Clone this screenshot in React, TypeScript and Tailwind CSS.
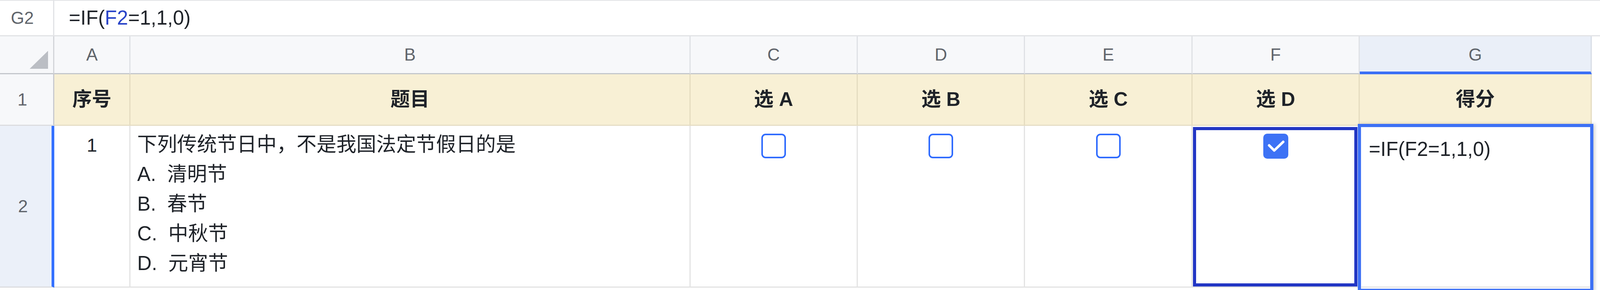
import React from "react";

const font = "font-['Liberation_Sans','Noto_Sans_CJK_SC',sans-serif]";
// column widths follow the reference sheet: row header, A, B, C, D, E, F, G, gutter
const grid = "grid grid-cols-[160fr_224fr_1646fr_492fr_492fr_492fr_492fr_682fr_24fr]";

function Box({ checked = false }: { checked?: boolean }) {
  if (checked) {
    return (
      <div className="w-[64px] h-[64px] rounded-[10px] bg-[#3d72f5] flex items-center justify-center">
        <svg width="64" height="64" viewBox="0 0 64 64">
          <polyline points="15,30 28,43 51,21" fill="none" stroke="#fff" strokeWidth="6.5" strokeLinecap="round" strokeLinejoin="round" />
        </svg>
      </div>
    );
  }
  return <div className="w-[63px] h-[63px] rounded-[11px] border-[4px] border-[#2f6bfe] bg-white" />;
}

const colLetters = ["A", "B", "C", "D", "E", "F"];
const heads = ["序号", "题目", "选 A", "选 B", "选 C", "选 D"];

export default function App() {
  return (
    <div className={`relative w-full h-[742px] overflow-hidden bg-white text-[#1f2329] ${font}`}>
      {/* formula bar */}
      <div className="flex h-[93px] border-t-2 border-b-[3px] border-[#e2e3e6]">
        <div className="w-[3.4%] shrink-0 border-r-[3px] border-[#e2e3e6] flex items-center justify-center pr-[22px] text-[44px] text-[#5f646b]">
          G2
        </div>
        <div className="flex items-center pl-[37px] text-[51px]">
          =IF(<span className="text-[#2a45c8]">F2</span>=1,1,0)
        </div>
      </div>

      {/* column headers */}
      <div className={`${grid} h-[97px]`}>
        <div className="min-w-0 bg-[#f7f8fa] border-r-[3px] border-b-[3px] border-r-[#d3d5d9] border-b-[#c4c7cc] flex items-end justify-end pr-[13px] pb-[11px]">
          <svg width="47" height="46" viewBox="0 0 47 46">
            <polygon points="47,0 47,46 0,46" fill="#bbbec4" />
          </svg>
        </div>
        {colLetters.map((c) => (
          <div
            key={c}
            className="min-w-0 bg-[#f7f8fa] border-r-[3px] border-b-[3px] border-r-[#dfe1e5] border-b-[#c4c7cc] flex items-center justify-center text-[44px] text-[#5f646b]"
          >
            {c}
          </div>
        ))}
        <div className="min-w-0 bg-[#eaeff8] border-r-[3px] border-r-[#d8dde6] border-b-[7px] border-b-[#3b6ff5] flex items-center justify-center pt-[4px] text-[44px] text-[#5f646b]">
          G
        </div>
        <div className="min-w-0 bg-white" />
      </div>

      {/* row 1 */}
      <div className={`${grid} h-[132px]`}>
        <div className="min-w-0 bg-[#f7f8fa] border-r-[3px] border-b-[3px] border-r-[#c8cacf] border-b-[#dcdde0] flex items-center justify-center pr-[22px] text-[45px] text-[#5f646b]">
          1
        </div>
        {[...heads, "得分"].map((h) => (
          <div
            key={h}
            className="min-w-0 bg-[#f8f0d5] border-r-[3px] border-b-[3px] border-r-[#e5dcc0] border-b-[#e6dec5] flex items-center justify-center text-[50px] font-bold"
          >
            {h}
          </div>
        ))}
        <div className="min-w-0 bg-white" />
      </div>

      {/* row 2 */}
      <div className={`${grid} h-[414px]`}>
        <div className="min-w-0 bg-[#ebf0f9] border-r-[7px] border-b-[3px] border-r-[#3370ff] border-b-[#dcdde0] flex items-center justify-center pr-[15px] text-[45px] text-[#5f646b]">
          2
        </div>
        <div className="min-w-0 border-r-[3px] border-b-[3px] border-[#e3e3e3] flex justify-center pt-[26px] text-[48px] leading-[48px]">
          1
        </div>
        <div className="min-w-0 border-r-[3px] border-b-[3px] border-[#e3e3e3] pl-[17px] pt-[10px] text-[51px] leading-[76px]">
          <div>下列传统节日中，不是我国法定节假日的是</div>
          <div>A.&nbsp;&nbsp;清明节</div>
          <div>B.&nbsp;&nbsp;春节</div>
          <div>C.&nbsp;&nbsp;中秋节</div>
          <div>D.&nbsp;&nbsp;元宵节</div>
        </div>
        {[false, false, false].map((c, i) => (
          <div key={i} className="min-w-0 border-r-[3px] border-b-[3px] border-[#e3e3e3] flex justify-center pt-[20px]">
            <Box checked={c} />
          </div>
        ))}
        {/* F2 – selected range */}
        <div className="relative min-w-0 border-r-[3px] border-b-[3px] border-[#e3e3e3] flex justify-center pt-[20px]">
          <Box checked />
          <div className="absolute left-[1px] right-[3px] top-[3px] bottom-[0px] border-[8px] border-[#2236c4]" />
        </div>
        {/* G2 – active cell */}
        <div className="relative z-10 min-w-0 border-r-[3px] border-b-[3px] border-[#e3e3e3] pl-[23px] pt-[34px] text-[51px] leading-[51px]">
          =IF(F2=1,1,0)
          <div className="absolute -left-[5px] -right-[7px] -top-[5px] -bottom-[14px] border-[8px] border-[#3c70f5] shadow-[4px_0_8px_rgba(0,0,0,0.18)]">
            <div className="w-full h-full border border-[#dfe6fb]" />
          </div>
        </div>
        <div className="min-w-0 bg-white" />
      </div>
    </div>
  );
}
